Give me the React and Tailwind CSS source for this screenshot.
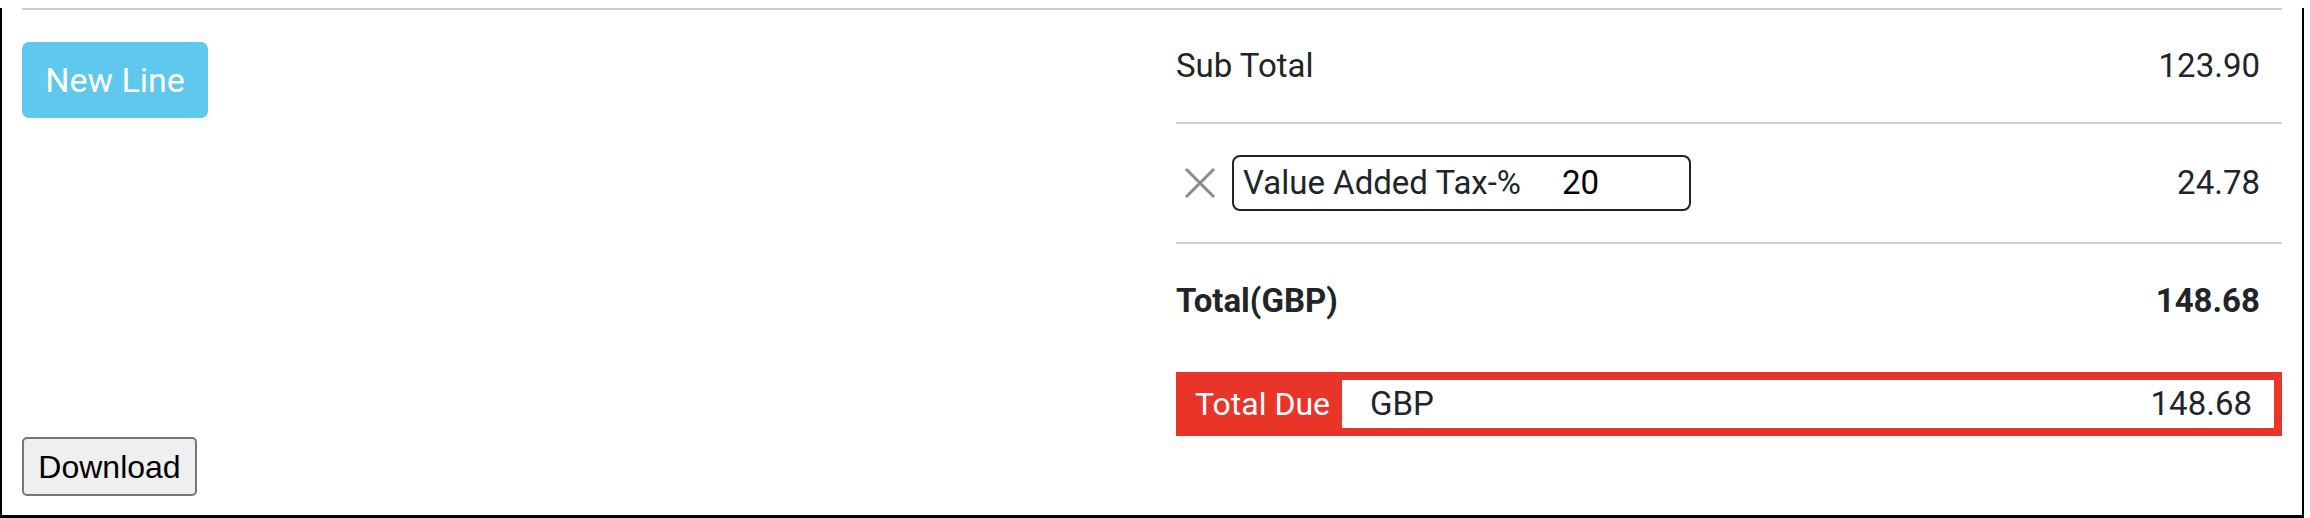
import { useState } from 'react';

function Row({ children, className = '' }) {
  return (
    <div className={`flex items-center justify-between pr-[22px] ${className}`}>
      {children}
    </div>
  );
}

export default function App() {
  const [rate, setRate] = useState('20');
  const subTotal = 123.9;
  const tax = (subTotal * Number(rate || 0)) / 100;
  const total = subTotal + tax;

  return (
    <div className="w-[2304px] bg-white border-x-2 border-b-[3px] border-black px-5 pb-[19px] text-[#212529] text-[33px] font-['Roboto',sans-serif]">
      <div className="flex border-t-2 border-[#cccccc] mt-2">
        <div className="flex-1 pt-8">
          <button className="w-[186px] h-[76px] rounded-[7px] bg-[#5ec8ed] text-white text-[34px] leading-none">
            New Line
          </button>
        </div>

        <div className="w-[1106px]">
          <Row className="h-[114px] border-b-2 border-[#cccccc]">
            <span>Sub Total</span>
            <span>{subTotal.toFixed(2)}</span>
          </Row>

          <Row className="h-[120px] border-b-2 border-[#cccccc]">
            <div className="flex items-center">
              <button className="w-[36px] h-[36px] ml-[6px] mr-[14px] flex items-center justify-center">
                <svg width="32" height="32" viewBox="0 0 32 32" fill="none" stroke="#8a8a8a" strokeWidth="3">
                  <path d="M2 2 L30 30 M30 2 L2 30" />
                </svg>
              </button>
              <div className="flex items-center w-[459px] h-[56px] border-2 border-[#222222] rounded-[8px] pl-[9px]">
                <span className="w-[319px] shrink-0">Value Added Tax-%</span>
                <input
                  value={rate}
                  onChange={(e) => setRate(e.target.value)}
                  className="w-[110px] bg-transparent outline-none text-black"
                />
              </div>
            </div>
            <span>{tax.toFixed(2)}</span>
          </Row>

          <Row className="h-[114px] font-bold">
            <span>Total(GBP)</span>
            <span>{total.toFixed(2)}</span>
          </Row>

          <div className="flex h-[64px] mt-[14px] bg-[#e9342a] p-2 pl-0">
            <div className="w-[166px] pl-[19px] flex items-center text-white text-[32px]">Total Due</div>
            <div className="flex-1 bg-white flex items-center justify-between pl-[28px] pr-[22px]">
              <span>GBP</span>
              <span>{total.toFixed(2)}</span>
            </div>
          </div>
        </div>
      </div>

      <button className="mt-px w-[175px] h-[59px] bg-[#efefef] border-2 border-[#767676] rounded-[5px] text-black text-[32px] font-['Liberation_Sans',Arial,sans-serif]">
        Download
      </button>
    </div>
  );
}
